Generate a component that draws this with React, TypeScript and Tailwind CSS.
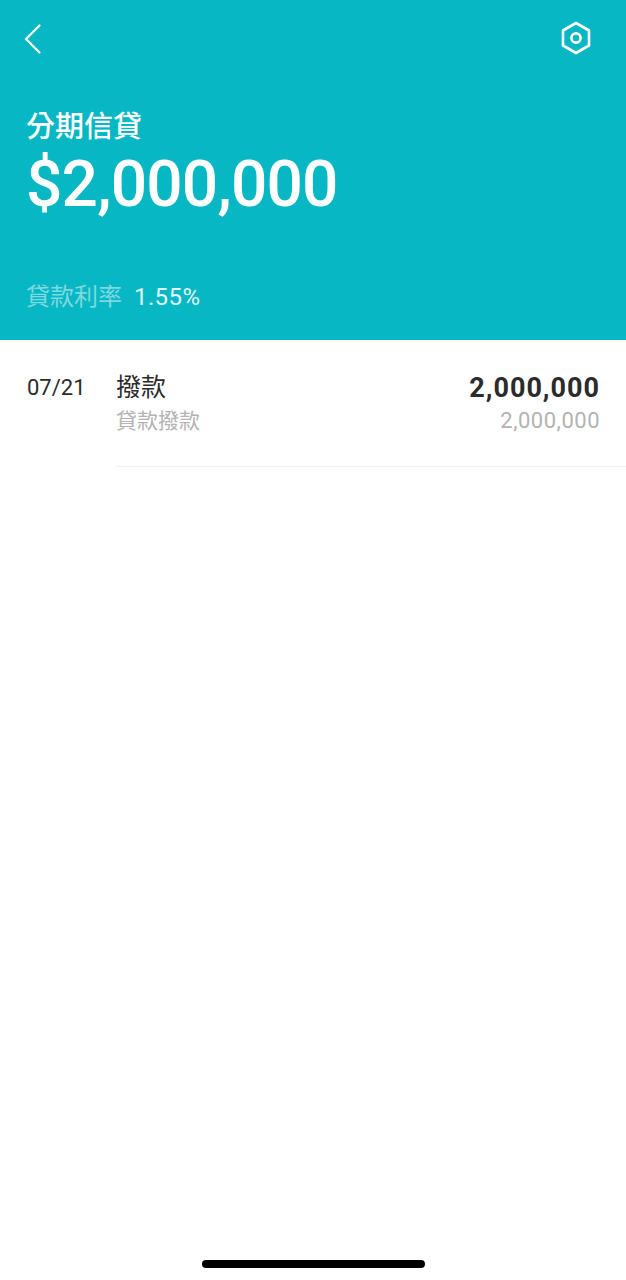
const cjk = "font-['Roboto','Noto_Sans_CJK_TC',sans-serif]";

function BackIcon() {
  return (
    <svg width="18" height="30" viewBox="0 0 18 30" fill="none" stroke="white" strokeWidth="2.2" strokeLinecap="round" strokeLinejoin="round">
      <path d="M15.5 1.5 2 15l13.5 13.5" />
    </svg>
  );
}

function SettingsIcon() {
  return (
    <svg className="mb-[-1px]" width="32" height="34" viewBox="0 0 32 34" fill="none" stroke="white" strokeWidth="2.6" strokeLinejoin="round">
      <path d="M16 2 29 9.5v15L16 32 3 24.5v-15z" />
      <circle cx="16" cy="17" r="4.6" />
    </svg>
  );
}

export default function App() {
  return (
    <div className={`flex h-screen w-full flex-col bg-white ${cjk}`}>
      <header className="flex h-[340px] flex-col bg-[#07b7c4] text-white">
        <div className="flex h-[54px] items-end justify-between pl-[24px] pr-[34px]">
          <BackIcon />
          <SettingsIcon />
        </div>
        <h1 className="mt-[53px] pl-[26px] text-[29px] leading-[40px] font-medium">分期信貸</h1>
        <div className="pl-[26px] text-[64px] leading-[76px] font-medium tracking-[-0.8px]">$2,000,000</div>
        <div className="mt-[58px] flex items-center gap-[12px] pl-[26px] text-[24px] leading-[32px]">
          <span className="text-[#7fd9e0]">貸款利率</span>
          <span className="tracking-[0.4px] text-[#e0f6f8]">1.55%</span>
        </div>
      </header>

      <section className="flex pl-[27px]">
        <div className="w-[89px] pt-[32px] text-[22px] leading-[32px] text-[#2b2b2b]">07/21</div>
        <div className="flex flex-1 justify-between border-b border-[#f1f1f1] pt-[32px] pr-[26px] pb-[29px]">
          <div>
            <div className="text-[25px] leading-[32px] text-[#2b2b2b]">撥款</div>
            <div className="mt-[1px] text-[21px] leading-[32px] text-[#b3b3b3]">貸款撥款</div>
          </div>
          <div className="text-right">
            <div className="text-[27px] leading-[32px] font-bold tracking-[1px] text-[#2b2b2b]">2,000,000</div>
            <div className="mt-[1px] text-[22px] leading-[32px] tracking-[0.5px] text-[#b3b3b3]">2,000,000</div>
          </div>
        </div>
      </section>

      <footer className="mt-auto flex justify-center pb-[12px]">
        <div className="h-[8px] w-[223px] rounded-full bg-black" />
      </footer>
    </div>
  );
}
